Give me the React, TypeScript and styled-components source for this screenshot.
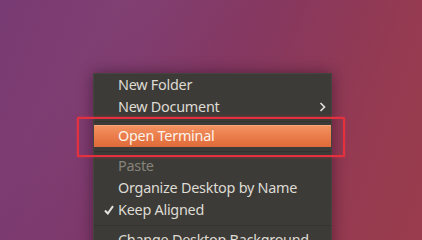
import styled, { createGlobalStyle } from "styled-components";

const GlobalStyle = createGlobalStyle`
  html, body {
    margin: 0;
    padding: 0;
    overflow: hidden;
  }
  body {
    font-family: "Noto Sans", "Open Sans", sans-serif;
  }
`;

const Desktop = styled.div`
  position: relative;
  width: 422px;
  height: 240px;
  overflow: hidden;
  background:
    linear-gradient(125deg, rgba(255, 255, 255, 0.05) 20%, rgba(255, 255, 255, 0) 45%),
    linear-gradient(110deg, #71306b 0%, #7c376b 30%, #87385f 55%, #943a52 80%, #9a3c4c 100%);
`;

const Menu = styled.ul`
  position: absolute;
  left: 93px;
  top: 73px;
  width: 239px;
  margin: 0;
  padding: 0;
  list-style: none;
  background: #3d3b37;
  border: 1px solid #47443f;
  border-bottom: none;
  box-shadow: 0 0 14px rgba(20, 0, 20, 0.45);
  box-sizing: border-box;
`;

const Item = styled.li<{ $active?: boolean; $disabled?: boolean }>`
  position: relative;
  height: 22px;
  display: flex;
  align-items: center;
  padding: 0 5px 0 24px;
  font-size: 14.4px;
  letter-spacing: -0.25px;
  color: ${(p) => (p.$disabled ? "#86837b" : p.$active ? "#fdf2ea" : "#dedbd4")};
  background: ${(p) =>
    p.$active ? "linear-gradient(#f39462, #ea7b4a 55%, #df6a39)" : "transparent"};
  box-shadow: ${(p) => (p.$active ? "inset 0 1px 0 rgba(255, 200, 170, 0.35)" : "none")};
  white-space: nowrap;
`;

const Label = styled.span`
  flex: 1;
  line-height: 22px;
`;

const Separator = styled.li<{ $size?: number }>`
  height: ${(p) => p.$size ?? 7}px;
  display: flex;
  align-items: center;
  &::after {
    content: "";
    flex: 1;
    height: 1px;
    background: #35332f;
  }
`;

const Check = styled.svg`
  position: absolute;
  left: 10px;
  top: 6px;
`;

const Arrow = styled.svg`
  margin-left: 8px;
`;

const Annotation = styled.div`
  position: absolute;
  left: 77px;
  top: 117px;
  width: 268px;
  height: 40px;
  box-sizing: border-box;
  border: 2.5px solid #e5303e;
  border-radius: 1px;
  box-shadow: 0 0 3px rgba(240, 60, 80, 0.5);
`;

export default function App() {
  return (
    <>
      <GlobalStyle />
      <Desktop>
        <Menu>
          <Item>
            <Label>New Folder</Label>
          </Item>
          <Item>
            <Label>New Document</Label>
            <Arrow width="7" height="10" viewBox="0 0 7 10">
              <path d="M1.5 1 L5.5 5 L1.5 9" fill="none" stroke="#e6e3dc" strokeWidth="1.6" />
            </Arrow>
          </Item>
          <Separator />
          <Item $active>
            <Label>Open Terminal</Label>
          </Item>
          <Separator $size={8} />
          <Item $disabled>
            <Label>Paste</Label>
          </Item>
          <Item>
            <Label>Organize Desktop by Name</Label>
          </Item>
          <Item>
            <Check width="10" height="10" viewBox="0 0 10 10">
              <path d="M1 5.5 L3.8 8.5 L9 1.2" fill="none" stroke="#e6e3dc" strokeWidth="2" />
            </Check>
            <Label>Keep Aligned</Label>
          </Item>
          <Separator $size={8} />
          <Item>
            <Label>Change Desktop Background</Label>
          </Item>
        </Menu>
        <Annotation />
      </Desktop>
    </>
  );
}
